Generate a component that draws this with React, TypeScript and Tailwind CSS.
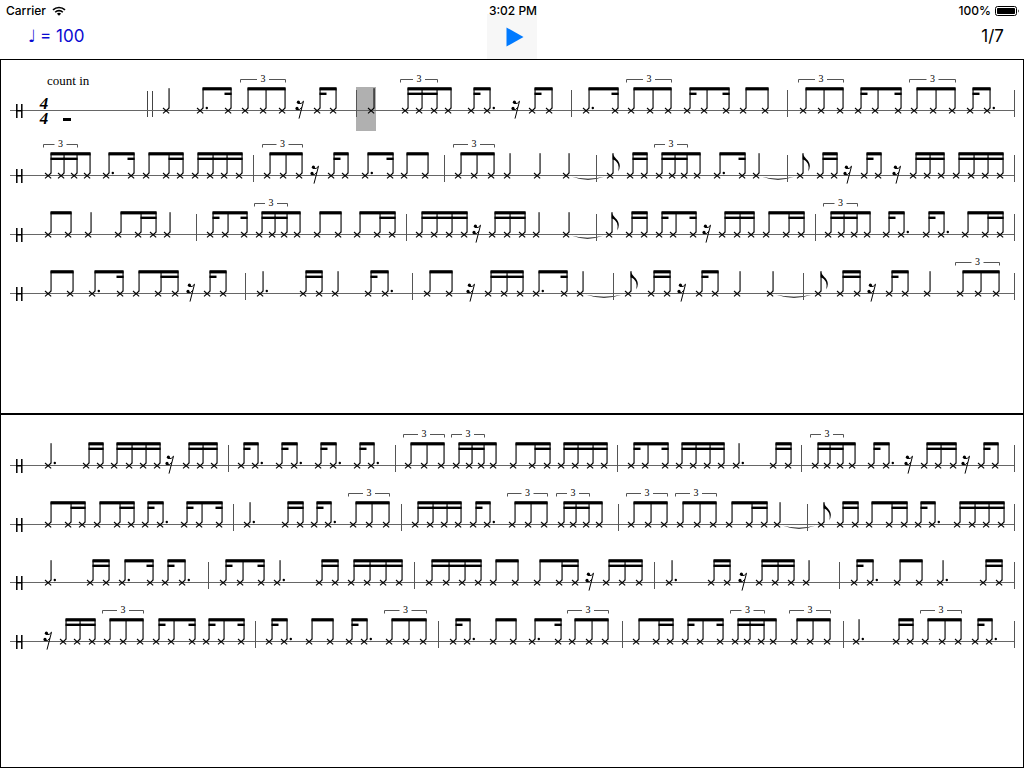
import { Fragment } from 'react'

// Score shorthand, one token per element: a code followed by x positions.
//   q / qd   quarter note / dotted quarter      e    flagged eighth
//   r        rest                               |    bar line
//   t        tie between two notes
// Longer runs of e (eighth), s (sixteenth) and d (dotted eighth) are beamed.
// "eee" and "ssse" are triplets.
const PAGES: { y: number; score: string }[][] = [
  [
    {
      y: 50,
      score:
        'q166 ds200,228 eee245,263,282 r300 se317,333 |356 q371 ssse405,419,434,448 sd471,487 r516 se532,549 |571 ' +
        'ds586,615 eee631,650,668 ses687,704,726 ee743,765 |787 eee803,821,840 ses858,875,898 eee914,933,952 sd970,987 |1014',
    },
    {
      y: 115,
      score:
        'ssse48,61,74,87 ds106,131 ess146,166,180 ssss195,210,224,239 |253 eee267,283,299 r315 se331,345 ds365,390 ee404,425 |444 ' +
        'eee458,474,491 q507 q537 q566 t566,610 |596 e610 ss630,644 ssse659,672,684,697 ds717,742 q756 t756,800 |787 ' +
        'e800 ss820,834 r848 se864,878 r897 sss913,927,941 ssss956,971,985,1000 |1014',
    },
    {
      y: 174,
      score:
        'ee48,68 q88 ess118,138,153 q167 |196 ses210,225,244 ssse259,272,284,297 ee317,338 ess357,377,392 |406 ' +
        'ssss419,434,449,464 r477 sss492,507,522 q536 q566 t566,609 |596 e609 ss629,644 ses659,673,693 r707 sss722,737,751 ess766,786,801 |815 ' +
        'ssse828,841,854,867 sd886,901 sd926,941 ess965,985,1000 |1014',
    },
    {
      y: 233,
      score:
        'ee48,70 ds92,120 ess136,158,175 r191 se207,223 |245 qd260 ss303,319 q335 sd368,385 |412 ' +
        'ee427,449 r471 sss488,504,520 ds536,564 q580 t580,628 |613 e628 ss651,667 r682 se699,715 q737 q770 t770,818 |803 ' +
        'e818 ss840,857 r872 se889,905 q927 eee960,978,996 |1014',
    },
  ],
  [
    {
      y: 50,
      score:
        'qd48 ss86,100 ssss114,129,143,157 r170 sss186,200,214 |228 sd241,255 sd279,294 sd318,333 sd357,371 |395 ' +
        'eee408,424,441 ssse456,469,481,493 ess513,532,547 ssss561,575,590,604 |617 ses631,645,665 ssss679,693,707,721 qd736 ss773,788 |801 ' +
        'ssse815,827,840,852 sd871,886 r909 sss924,938,953 r966 se981,995 |1014',
    },
    {
      y: 109,
      score:
        'ess48,68,82 ess97,117,131 sd145,160 ses184,199,219 |233 qd247 ss285,300 sd314,328 eee353,369,386 |401 ' +
        'ssss415,430,444,458 sd473,487 eee512,528,544 ssse561,573,586,599 |618 eee631,648,664 eee680,697,713 ess729,749,764 q777 t777,821 |807 ' +
        'e821 ss840,855 ess869,889,904 sd918,932 ssss957,972,986,1001 |1014',
    },
    {
      y: 167,
      score:
        'qd48 ss90,106 ds122,150 sd165,182 |208 ses223,240,261 qd277 ss319,335 ssss351,367,383,399 |414 ' +
        'ssss429,446,462,478 ee493,515 ess537,559,575 r590 sss606,622,639 |654 qd669 ss711,727 r743 sss759,775,791 q806 |839 ' +
        'sd854,870 ee897,919 qd940 ss983,999 |1014',
    },
    {
      y: 226,
      score:
        'r48 sss63,77,92 eee107,123,140 ses156,171,192 ses206,221,241 |255 sd269,284 ee309,330 sd349,364 eee389,406,423 |438 ' +
        'sd453,467 ee493,513 ds532,558 eee572,589,605 |622 ess636,656,670 ses685,700,720 ssse735,747,761,773 eee794,810,827 |843 ' +
        'qd856 ss896,910 eee925,942,958 sd975,989 |1014',
    },
  ],
]

const STEM = 2.5
const STEM_W = 1.1
const BEAM_TOP = -22.8

function Note({ x, dotted }: { x: number; dotted?: boolean }) {
  return (
    <g>
      <path d={`M${x - 3} -2l6.2 5.4M${x - 3} 3.4l6.2 -5.4`} stroke="#000" strokeWidth={1.1} />
      <rect x={x + STEM} y={-21.8} width={STEM_W} height={20} />
      {dotted && <circle cx={x + 6.8} cy={-2} r={1.2} />}
    </g>
  )
}

function Triplet({ from, to }: { from: number; to: number }) {
  const mid = (from + to) / 2
  return (
    <g>
      <path
        d={`M${from} -27.5v-3H${mid - 6}M${mid + 6} -30.5H${to}v3`}
        fill="none"
        stroke="#555"
        strokeWidth={1}
      />
      <text x={mid} y={-28} fontSize={10} textAnchor="middle">
        3
      </text>
    </g>
  )
}

function Beamed({ code, xs }: { code: string; xs: number[] }) {
  const stems = xs.map((x) => x + STEM)
  const last = stems.length - 1
  const beams: [number, number][] = []

  for (let i = 0; i <= last; i++) {
    if (code[i] !== 's') continue
    if (code[i + 1] === 's') {
      beams.push([stems[i], stems[i + 1] + STEM_W])
    } else if (code[i - 1] !== 's') {
      beams.push(i === 0 ? [stems[i], stems[i] + 7] : [stems[i] - 6, stems[i] + STEM_W])
    }
  }

  return (
    <g>
      {xs.map((x, i) => (
        <Note key={i} x={x} dotted={code[i] === 'd'} />
      ))}
      <rect x={stems[0]} y={BEAM_TOP} width={stems[last] + STEM_W - stems[0]} height={3.2} />
      {beams.map(([a, b]) => (
        <rect key={a} x={a} y={-17.4} width={b - a} height={2.4} />
      ))}
      {(code === 'eee' || code === 'ssse') && <Triplet from={xs[0] - 4.5} to={xs[2] + 3.5} />}
    </g>
  )
}

function Rest({ x }: { x: number }) {
  return (
    <g>
      <circle cx={x - 1.6} cy={-7.8} r={1.6} />
      <circle cx={x - 3} cy={-1.6} r={1.6} />
      <path
        d={`M${x - 2} -6.6Q${x + 1.6} -5.4 ${x + 3.5} -8.8L${x - 1} 8.6M${x - 3.4} -0.4Q${x} 0.8 ${x + 1.8} -2.8`}
        fill="none"
        stroke="#000"
        strokeWidth={1}
      />
    </g>
  )
}

function Symbol({ token }: { token: string }) {
  const [, code, list] = token.match(/^([a-z|]+)([\d,]+)$/)!
  const xs = list.split(',').map(Number)
  const x = xs[0]

  switch (code) {
    case '|':
      return <rect x={x} y={-20} width={1} height={27} fill="#555" />
    case 'r':
      return <Rest x={x} />
    case 'q':
    case 'qd':
      return <Note x={x} dotted={code === 'qd'} />
    case 'e':
      return (
        <g>
          <Note x={x} />
          <path
            d={`M${x + 2.6} -22C${x + 3.4} -17 ${x + 10} -15 ${x + 9.8} -9Q${x + 9.6} -6 ${x + 8.4} -3.4Q${x + 9.2} -8 ${x + 8} -11Q${x + 6.2} -14.8 ${x + 2.6} -15.6Z`}
          />
        </g>
      )
    case 't': {
      const from = x + 6
      const to = xs[1] - 6
      const mid = (from + to) / 2
      return <path d={`M${from} 1.8Q${mid} 7.6 ${to} 1.8Q${mid} 5.8 ${from} 1.8Z`} />
    }
    default:
      return <Beamed code={code} xs={xs} />
  }
}

function Stave({ y, score }: { y: number; score: string }) {
  return (
    <g transform={`translate(0 ${y})`}>
      <rect x={10} y={0} width={1005} height={1} fill="#666" />
      <path d="M16.8 -6v14M21.8 -6v14M16 0.7h6.5" stroke="#000" strokeWidth={1.5} />
      {score.split(' ').map((token, i) => (
        <Fragment key={i}>
          <Symbol token={token} />
        </Fragment>
      ))}
    </g>
  )
}

function CountIn() {
  return (
    <g>
      <text x={47} y={25} fontSize={13}>
        count in
      </text>
      <text fontSize={17} fontWeight={700} fontStyle="italic" textAnchor="middle">
        <tspan x={44} y={49}>
          4
        </tspan>
        <tspan x={44} y={64}>
          4
        </tspan>
      </text>
      <rect x={63} y={58} width={8} height={3} />
      <rect x={147} y={31} width={1} height={26} fill="#444" />
      <rect x={152} y={31} width={1} height={26} fill="#444" />
    </g>
  )
}

function ScorePage({ index }: { index: number }) {
  return (
    <section className="min-h-0 flex-1 overflow-hidden border border-black bg-white">
      <svg
        viewBox="1 0 1022 290"
        className="block w-full font-['Liberation_Serif',serif]"
        role="img"
        aria-label={`Score page ${index + 1}`}
      >
        {index === 0 && (
          <>
            <rect x={356} y={27} width={20} height={44} fill="#b0b0b0" />
            <CountIn />
          </>
        )}
        {PAGES[index].map((stave) => (
          <Stave key={stave.y} {...stave} />
        ))}
      </svg>
    </section>
  )
}

function StatusBar() {
  return (
    <div className="absolute inset-x-0 top-0 grid h-[22px] grid-cols-3 items-center pr-1 pl-1.5 text-[12px] leading-5 font-medium">
      <div className="flex items-center gap-1.5">
        <span>Carrier</span>
        <svg viewBox="0 0 14 10" className="h-2.5 w-3.5" fill="none" stroke="#000" strokeWidth={1.6}>
          <path d="M1 3.9a8.6 8.6 0 0 1 12 0M3.2 6.2a5.4 5.4 0 0 1 7.6 0" />
          <path d="M7 9.8L4.9 7.7a3 3 0 0 1 4.2 0z" fill="#000" stroke="none" />
        </svg>
      </div>
      <div className="text-center">3:02 PM</div>
      <div className="flex items-center justify-end gap-1">
        <span>100%</span>
        <svg viewBox="0 0 25 10" className="h-2.5 w-[25px]">
          <rect x="0.5" y="0.5" width="21" height="9" rx="2" fill="none" stroke="#000" />
          <rect x="2" y="2" width="18" height="6" rx="0.8" />
          <path d="M23 3.2q1.6 1.8 0 3.6z" />
        </svg>
      </div>
    </div>
  )
}

export default function App() {
  return (
    <div className="flex h-screen min-h-[640px] flex-col bg-white font-['Inter',sans-serif] text-black">
      <header className="relative grid h-[59px] shrink-0 grid-cols-3 items-end">
        <button
          type="button"
          className="flex h-[45px] items-center gap-1 justify-self-start pl-7 text-[17px] text-[#0a0ad2]"
        >
          <span className="font-['DejaVu_Sans',sans-serif]">♩</span>
          <span>= 100</span>
        </button>
        <button
          type="button"
          aria-label="Play"
          className="flex h-[45px] w-[50px] items-center justify-center justify-self-center bg-[#f7f7f7] pl-1.5"
        >
          <svg viewBox="0 0 18 20" className="h-5 w-[18px]">
            <path d="M0.5 0.5L17.5 10L0.5 19.5z" fill="#007aff" />
          </svg>
        </button>
        <div className="flex h-[45px] items-center justify-self-end pr-5 text-[17px]">1/7</div>
        <StatusBar />
      </header>
      <main className="flex min-h-0 flex-1 flex-col">
        <ScorePage index={0} />
        <ScorePage index={1} />
      </main>
    </div>
  )
}
